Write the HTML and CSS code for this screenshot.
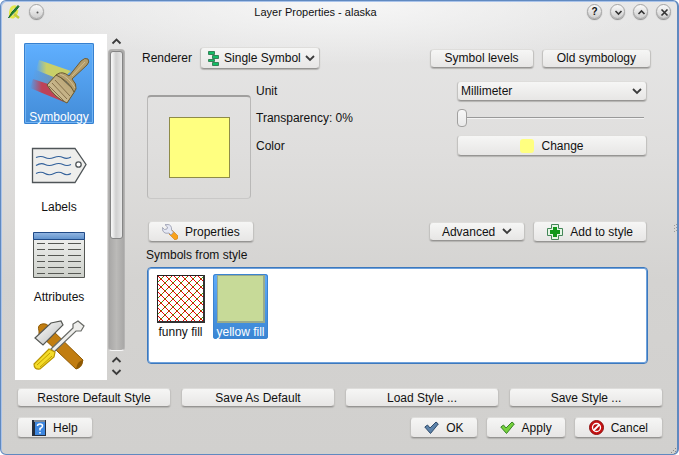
FILE: index.html
```html
<!DOCTYPE html>
<html lang="en">
<head>
<meta charset="utf-8">
<title>Layer Properties - alaska</title>
<link rel="stylesheet" href="styles.css">
</head>
<body>
<div class="window">
  <header class="titlebar">
    <svg class="app-logo" width="14" height="16" viewBox="0 0 14 16" aria-hidden="true">
      <path d="M9 3C5 2 4 5 3.500 8C3 12 4 13.500 6 13C8.500 12 9.500 9 10 6" fill="none" stroke="#e3e84a" stroke-width="3"/>
      <path d="M7 10L12 14" stroke="#c3cd3a" stroke-width="2.500"/>
      <path d="M1.500 14L5 8L11 1.500L12 2.500L8.500 7L5.500 10Z" fill="#1f8a2e" stroke="#14662a" stroke-width="1"/>
    </svg>
    <button class="round" type="button" aria-label="Window menu"><svg width="15" height="15" viewBox="0 0 15 15"><circle cx="7.500" cy="7.500" r="1" fill="#555"/></svg></button>
    <h1 class="title">Layer Properties - alaska</h1>
    <div class="window-buttons">
      <button class="round" type="button" aria-label="Help">?</button>
      <button class="round" type="button" aria-label="Minimize"><svg width="15" height="15" viewBox="0 0 15 15"><path d="M4.500 6L7.500 9L10.500 6"/></svg></button>
      <button class="round" type="button" aria-label="Maximize"><svg width="15" height="15" viewBox="0 0 15 15"><path d="M4.500 9L7.500 6L10.500 9"/></svg></button>
      <button class="round" type="button" aria-label="Close"><svg width="15" height="15" viewBox="0 0 15 15"><path d="M4.500 4.500L10.500 10.500M10.500 4.500L4.500 10.500"/></svg></button>
    </div>
  </header>

  <div class="content">
    <nav class="sidebar">
      <div class="pages">
        <a class="page selected" href="#symbology">
          <svg width="64" height="64" viewBox="0 0 64 64" aria-hidden="true">
            <defs>
              <linearGradient id="yellow" x1="0" x2="1"><stop offset="0" stop-color="#c9cf68" stop-opacity="0"/><stop offset=".3" stop-color="#c9cf68"/><stop offset="1" stop-color="#c9cf68"/></linearGradient>
              <linearGradient id="red" x1="0" x2="1"><stop offset="0" stop-color="#bd4258" stop-opacity="0"/><stop offset=".35" stop-color="#bd4258"/><stop offset="1" stop-color="#bd4258"/></linearGradient>
              <linearGradient id="grey" x1="0" x2="1"><stop offset="0" stop-color="#6f94b8" stop-opacity="0"/><stop offset="1" stop-color="#7791a8"/></linearGradient>
              <linearGradient id="bristle" x1="1" y1="0" x2="0" y2="1"><stop offset="0" stop-color="#b09a68"/><stop offset="1" stop-color="#d8c9a2"/></linearGradient>
            </defs>
            <path d="M8 24L30 31L22 40L5 34Z" fill="url(#grey)"/>
            <path d="M12 14L44 25L34 34L9 24Z" fill="url(#yellow)"/>
            <path d="M6 33L21 38L37 56L3 42Z" fill="url(#red)"/>
            <path d="M20 39L30 28L48 45L40 57Q28 52 20 39Z" fill="url(#bristle)" stroke="#69572e" stroke-width="1"/>
            <path d="M25 37L40 53M28 34L43 50M22 40L37 55" stroke="#85704a" stroke-width="1"/>
            <path d="M42 30L54 15Q58 11 61 13Q63 16 60 19L45 33Q50 38 49 43L47 46Q42 35 29 29Q35 24 42 30Z" fill="#b39d6c" stroke="#6b5a33" stroke-width="1"/>
            <path d="M33 28Q42 31 48 42M45 30L58 16" fill="none" stroke="#d1be8f" stroke-width="1"/>
          </svg>
          <span>Symbology</span>
        </a>
        <a class="page" href="#labels">
          <svg width="64" height="64" viewBox="0 0 64 64" aria-hidden="true">
            <path d="M5.500 12.500H48L59 28.500L48 46.500H5.500Z" fill="#eeeeec" stroke="#4f5558" stroke-width="1.300"/>
            <circle cx="51.500" cy="28.500" r="2.700" fill="#fff" stroke="#4f5558" stroke-width="1.300"/>
            <g fill="none" stroke="#32609a" stroke-width="1.200"><path d="M9 21.500Q14 19.500 18 21.500T27 21.500T36 21.500T44 21"/><path d="M9 29.500Q14 26.500 18 28.500T27 28.500T36 28.500T44 28.500"/><path d="M9 37.500Q14 35 18 37.500T27 37.500T36 37.500T44 37.500"/></g>
          </svg>
          <span>Labels</span>
        </a>
        <a class="page" href="#attributes">
          <svg width="64" height="64" viewBox="0 0 64 64" aria-hidden="true">
            <defs><linearGradient id="head" x2="0" y2="1"><stop offset="0" stop-color="#95b8e3"/><stop offset="1" stop-color="#5e91cc"/></linearGradient><linearGradient id="sheet" x2="0" y2="1"><stop offset="0" stop-color="#edeeec"/><stop offset="1" stop-color="#cdd0ca"/></linearGradient></defs>
            <path d="M6.500 13.500H57.500V51.500H6.500Z" fill="url(#sheet)" stroke="#555753"/>
            <path d="M6.500 6.500H57.500V13.500H6.500Z" fill="url(#head)" stroke="#204a87"/>
            <path d="M10 17.500H18M21 17.500H37M41 17.500H54M10 23.500H18M21 23.500H37M41 23.500H54M10 29.500H18M21 29.500H37M41 29.500H54M10 35.500H18M21 35.500H37M41 35.500H54M10 41.500H18M21 41.500H37M41 41.500H54M10 47.500H18M21 47.500H37M41 47.500H54" stroke="#555753"/>
          </svg>
          <span>Attributes</span>
        </a>
        <a class="page" href="#actions" aria-label="Actions">
          <svg width="64" height="64" viewBox="0 0 64 64" aria-hidden="true">
            <defs><linearGradient id="steel" x2="1" y2="1"><stop offset="0" stop-color="#fff"/><stop offset="1" stop-color="#b7b9b8"/></linearGradient></defs>
            <path d="M12 15Q10 9 15 8Q20 7 22 11L56 44Q54 52 49 53L12 18Z" fill="#c17d11" stroke="#8f5902"/>
            <path d="M56 44Q50 45 49 53Q56 52 56 44Z" fill="#8f5902"/>
            <path d="M8 22L24 7L34 5L36 9L16 29Z" fill="url(#steel)" stroke="#555753" stroke-width="1.200"/>
            <path d="M24 33L46 12V8L51 5L57 10L54 15L49 15L27 36Z" fill="#eeeeec" stroke="#686a66" stroke-width="1.200"/>
            <path d="M22 33L28 36L27 41L13 53Q7 54 7 48Z" fill="#f4dc29" stroke="#b89400" stroke-width="1.200"/>
            <path d="M10 49L23 37M13 51L25 40" stroke="#c4a000"/>
          </svg>
        </a>
      </div>
      <div class="scrollbar" aria-hidden="true">
        <svg width="17" height="15" viewBox="0 0 17 15"><path class="chevron" d="M4.500 9.500L8.500 5.500L12.500 9.500"/></svg>
        <div class="trough"><div class="handle"></div></div>
        <svg width="17" height="29" viewBox="0 0 17 29"><path class="chevron" d="M4.500 11L8.500 7L12.500 11M4.500 19L8.500 23L12.500 19"/></svg>
      </div>
    </nav>

    <main class="panel">
      <div class="renderer-row">
        <label for="renderer">Renderer</label>
        <div class="combo renderer">
          <svg class="symbol-icon" width="11" height="15" viewBox="0 0 11 15" aria-hidden="true"><g fill="#12bd66" stroke="#368258"><path d="M.5 .5H6.500V3.500H.5Z"/><path d="M4.500 4.500H10.500V7.500H4.500Z"/><path d="M.5 8.500H6.500V10.500H.5Z"/><path d="M4.500 11.500H10.500V14.500H4.500Z"/></g></svg>
          <select id="renderer"><option>Single Symbol</option></select>
          <svg class="arrow" width="10" height="7" viewBox="0 0 10 7" aria-hidden="true"><path class="chevron" d="M1 1L5 5L9 1"/></svg>
        </div>
        <div class="renderer-actions">
          <button class="btn small" type="button">Symbol levels</button>
          <button class="btn small" type="button">Old symbology</button>
        </div>
      </div>

      <div class="symbol-row">
        <div class="preview"><div class="swatch"></div></div>
        <div class="fields">
          <label for="unit">Unit</label>
          <div class="combo">
            <select id="unit"><option>Millimeter</option></select>
            <svg class="arrow" width="10" height="7" viewBox="0 0 10 7" aria-hidden="true"><path class="chevron" d="M1 1L5 5L9 1"/></svg>
          </div>
          <label for="transparency">Transparency: 0%</label>
          <input id="transparency" class="slider" type="range" min="0" max="100" value="0">
          <label for="color">Color</label>
          <button id="color" class="btn" type="button"><i class="color-chip"></i>Change</button>
        </div>
      </div>

      <div class="tools-row">
        <button class="btn" type="button">
          <svg width="16" height="16" viewBox="0 0 16 16" aria-hidden="true"><path d="M8 8L10 6L16 12Q17 15 13 16L7 10Z" fill="#f9a21b" stroke="#ce8420" stroke-width=".7"/><path d="M3 .7L5.500 3L5 5L2.500 5.500L.5 3.500Q0 8 3 9Q5 9.500 7 9L9 11L11.500 8L9.500 6Q10 1 6 .5Z" fill="#e5e8f4" stroke="#9599ac" stroke-width=".8"/></svg>
          Properties
        </button>
        <button class="btn small advanced" type="button">Advanced
          <svg width="10" height="7" viewBox="0 0 10 7" aria-hidden="true"><path class="chevron" d="M1 1L5 5L9 1"/></svg>
        </button>
        <button class="btn" type="button">
          <svg width="16" height="16" viewBox="0 0 16 16" aria-hidden="true"><path d="M4.500 .5H11.500V4.500H15.500V11.500H11.500V15.500H4.500V11.500H.5V4.500H4.500Z" fill="#e5f5e5" stroke="#448658" stroke-linejoin="round"/><path d="M6 3H10V6H13V10H10V13H6V10H3V6H6Z" fill="#109719"/></svg>
          Add to style
        </button>
      </div>

      <h2 class="list-title">Symbols from style</h2>
      <div class="symbols">
        <button class="symbol" type="button">
          <svg width="48" height="48" viewBox="0 0 48 48" aria-hidden="true">
            <defs>
              <pattern id="hatch" width="8" height="8" patternUnits="userSpaceOnUse"><path d="M-1 9L9 -1" stroke="#4a9d00"/><path d="M-1 -1L9 9" stroke="#f00000"/><path d="M2 6L3.500 4.500M6 2L7 1" stroke="#f00000"/></pattern>
            </defs>
            <path d="M0 0H48V48H0Z" fill="#fff"/><path d="M0 0H48V48H0Z" fill="url(#hatch)"/><path d="M.5 0V47M0 .5H47" stroke="#222"/><path d="M47 0V48M0 47H48" stroke="#333" stroke-width="2"/>
          </svg>
          <span>funny fill</span>
        </button>
        <button class="symbol selected" type="button">
          <svg width="48" height="48" viewBox="0 0 48 48" aria-hidden="true"><path d="M0 0H48V48H0Z" fill="#98ab8c"/><path d="M1 1H46V46H1Z" fill="#c7da98"/></svg>
          <span>yellow fill</span>
        </button>
      </div>
    </main>
  </div>

  <div class="style-buttons">
    <button class="btn small" type="button">Restore Default Style</button>
    <button class="btn small" type="button">Save As Default</button>
    <button class="btn small" type="button">Load Style ...</button>
    <button class="btn small" type="button">Save Style ...</button>
  </div>

  <footer class="dialog-buttons">
    <button class="btn help" type="button">
      <svg width="14" height="16" viewBox="0 0 14 16" aria-hidden="true"><path d="M0 0H14V16H0Z" fill="#252e3c"/><path d="M3 2H13V15H3Z" fill="#3c86df"/><path d="M2 1H13" stroke="#dfe9f2"/><path d="M5.500 6Q5.500 4 8 4T10.500 6Q10.500 7.500 8 8.500V10.500M8 12V13.500" fill="none" stroke="#fff" stroke-width="1.500"/></svg>
      Help
    </button>
    <button class="btn" type="button">
      <svg width="15" height="14" viewBox="0 0 15 14" aria-hidden="true"><path d="M.8 6L3.500 4L6 7L12 1L14.300 3L6.500 12.500Z" fill="#5d83aa" stroke="#2f4b6b"/></svg>
      OK
    </button>
    <button class="btn" type="button">
      <svg width="15" height="14" viewBox="0 0 15 14" aria-hidden="true"><path d="M.8 6L3.500 4L6 7L12 1L14.300 3L6.500 12.500Z" fill="#76d13c" stroke="#398328"/></svg>
      Apply
    </button>
    <button class="btn cancel" type="button">
      <svg width="15" height="15" viewBox="0 0 15 15" aria-hidden="true"><circle cx="7.500" cy="7.500" r="7" fill="#c81212" stroke="#8d1010"/><circle cx="7.500" cy="7.500" r="4" fill="#b80d0d" stroke="#fff" stroke-width="1.300"/><path d="M4.500 10.500L10.500 4.500" stroke="#fff" stroke-width="1.800"/></svg>
      Cancel
    </button>
  </footer>
  <svg class="grip" width="6" height="6" viewBox="0 0 6 6" aria-hidden="true"><path d="M4 0H5V1H4ZM2 2H3V3H2ZM4 3H5V4H4ZM0 4H1V5H0ZM3 5H4V6H3Z" fill="#888"/></svg>
  <svg class="edge-grip" width="3" height="8" viewBox="0 0 3 8" aria-hidden="true"><path d="M0 1H1V2H0ZM2 0H3V1H2ZM0 4H1V5H0ZM2 3H3V4H2ZM0 7H1V8H0ZM2 6H3V7H2Z" fill="#999"/></svg>
</div>
</body>
</html>
```
FILE: styles.css
```css
* { box-sizing: border-box; }

body {
  margin: 0;
  background: #fff;
  color: #111;
  font: 12px/14px "Liberation Sans", Arial, sans-serif;
}

button, select, input { font: inherit; color: inherit; margin: 0; }
svg { display: block; flex: none; }
.chevron { fill: none; stroke: #3b3b3b; stroke-width: 1.8; }

.window {
  position: relative;
  display: flex;
  flex-direction: column;
  min-height: 100vh;
  border: 1px solid #6089c0;
  border-right-width: 2px;
  border-radius: 6px;
  background:
    radial-gradient(ellipse 320px 64px at 50% 0, #f7f7f7, rgba(247, 247, 247, 0)),
    linear-gradient(#e7e7e7, #dfdedd 150px, #d4d3d1 280px, #d1d0ce);
  box-shadow: inset 1px 1px 0 #a9c3ea;
}

/* Title bar */
.titlebar {
  display: grid;
  grid-template-columns: 14px 15px 1fr auto;
  align-items: center;
  gap: 8px;
  height: 21px;
  padding: 0 6px;
}
.title { margin: 0; font-size: 11px; font-weight: normal; text-align: center; }
.window-buttons { display: flex; gap: 8px; }
.round {
  display: grid;
  place-items: center;
  width: 15px;
  height: 15px;
  padding: 0;
  border: 1px solid #a5a5a5;
  border-radius: 50%;
  background: linear-gradient(#fafafa, #cfcfcf);
  box-shadow: 0 1px 1px #8a8a8a;
  font-size: 10px;
  font-weight: bold;
  line-height: 13px;
}
.round path { fill: none; stroke: #333; stroke-width: 1.6; }

/* Body */
.content { display: flex; flex: 1; gap: 17px; padding: 12px 26px 0 14px; }

.sidebar { display: flex; gap: 1px; height: 346px; }
.pages {
  display: flex;
  flex-direction: column;
  gap: 9px;
  width: 92px;
  padding: 9px 13px 0 9px;
  overflow: hidden;
  background: #fff;
}
.page {
  display: flex;
  flex: none;
  flex-direction: column;
  align-items: center;
  height: 81px;
  padding-top: 3px;
  border-radius: 2px;
  color: #111;
  text-decoration: none;
}
.page.selected {
  background: linear-gradient(#60b0ff, #428bd7);
  box-shadow: inset 0 0 0 1px #3580d0, inset 0 0 0 2px #72b4f4;
  color: #fff;
}

.scrollbar { display: flex; flex-direction: column; width: 17px; }
.trough {
  flex: 1;
  padding: 1px;
  border: 1px solid #b5b4b3;
  border-bottom: 1px solid #f8f8f8;
  border-radius: 4px;
  background: linear-gradient(90deg, #a8a7a6, #bbbab8 50%, #a8a7a6);
}
.handle {
  height: 63%;
  border: 1px solid #858585;
  border-radius: 3px;
  background: linear-gradient(90deg, #f5f5f5 1px, #d0d0d0 5px, #e8e8e8 11px, #f6f6f6);
}

.panel { flex: 1; min-width: 0; padding-top: 13px; }

/* Shared controls */
.btn, .combo {
  height: 21px;
  border: 1px solid #c3c2c0;
  border-top-color: #dedddb;
  border-bottom-color: #969593;
  border-radius: 4px;
  background: linear-gradient(#f6f6f5, #e7e6e5);
  box-shadow: 0 1px 1px #b4b3b1;
}
.btn {
  display: inline-flex;
  align-items: center;
  justify-content: center;
  gap: 7px;
  padding: 0 13px;
  white-space: nowrap;
}
.btn.small { height: 19px; padding: 0 14px; }
.combo { position: relative; display: flex; align-items: center; height: 20px; }
.combo select {
  width: 100%;
  height: 100%;
  padding: 0 20px 0 3px;
  border: 0;
  background: none;
  appearance: none;
}
.arrow { position: absolute; right: 4px; pointer-events: none; }

/* Renderer */
.renderer-row { display: flex; align-items: center; gap: 8px; height: 22px; }
.combo.renderer { width: 120px; height: 22px; padding-left: 7px; }
.combo.renderer select { padding: 0 0 0 5px; }
.renderer-actions { display: flex; gap: 8px; margin-left: auto; }

/* Symbol settings */
.symbol-row { display: flex; gap: 5px; margin-top: 12px; padding: 0 4px 0 5px; }
.preview {
  display: grid;
  place-items: center;
  width: 104px;
  height: 104px;
  margin-top: 14px;
  border: 1px solid #b9b8b7;
  border-top: 2px solid #a09f9e;
  border-bottom-color: #c9c8c7;
  border-radius: 4px;
}
.swatch { width: 61px; height: 61px; border: 1px solid #8e8b47; background: #ffff80; }
.fields {
  display: grid;
  flex: 1;
  grid-template-columns: 201fr 190fr;
  grid-template-rows: 20px 18px 21px;
  row-gap: 8px;
  align-content: start;
  align-items: center;
}
.slider { width: 100%; height: 18px; background: none; appearance: none; }
.slider::-webkit-slider-runnable-track {
  height: 18px;
  background: linear-gradient(#999, #999) 50% 8px / calc(100% - 6px) 1px no-repeat,
    linear-gradient(#f3f3f3, #f3f3f3) 50% 9px / calc(100% - 6px) 1px no-repeat;
}
.slider::-webkit-slider-thumb {
  width: 10px;
  height: 18px;
  border: 1px solid #a1a09f;
  border-radius: 4px;
  background: linear-gradient(#f7f7f7, #e9e9e9);
  appearance: none;
}
.color-chip { width: 14px; height: 14px; border-radius: 3px; background: #ffff80; }

/* Symbol tools and list */
.tools-row { display: flex; align-items: center; gap: 8px; margin-top: 22px; padding: 0 4px 0 6px; }
.btn.advanced { margin-left: auto; padding: 0 12px; }
.list-title { margin: 6px 0 5px 4px; font-size: 12px; font-weight: normal; }
.symbols {
  display: flex;
  align-items: flex-start;
  gap: 5px;
  height: 97px;
  margin: 0 3px 0 5px;
  padding: 6px 5px;
  border: 1px solid #3c78bd;
  border-radius: 4px;
  background: #fff;
  box-shadow: inset 0 0 0 1px #6fa2dc;
}
.symbol {
  display: flex;
  flex-direction: column;
  align-items: center;
  width: 55px;
  height: 65px;
  padding: 1px 0;
  border: 0;
  border-radius: 3px;
  background: none;
  white-space: nowrap;
}
.symbol span { margin-top: 2px; }
.symbol.selected {
  background: linear-gradient(#60acfa, #3985d3);
  box-shadow: inset 0 0 0 1px #3c84d0;
  color: #fff;
}

/* Bottom buttons */
.style-buttons {
  display: grid;
  grid-template-columns: repeat(4, 1fr);
  gap: 10px;
  padding: 8px 14px 0 16px;
}
.dialog-buttons { display: flex; gap: 8px; padding: 10px 14px 16px 16px; }
.btn.help { margin-right: auto; padding: 0 14px; }
.btn.cancel { padding: 0 14px; }

.grip { position: absolute; right: 0; bottom: 0; }
.edge-grip { position: absolute; right: 0; top: 223px; }
```
